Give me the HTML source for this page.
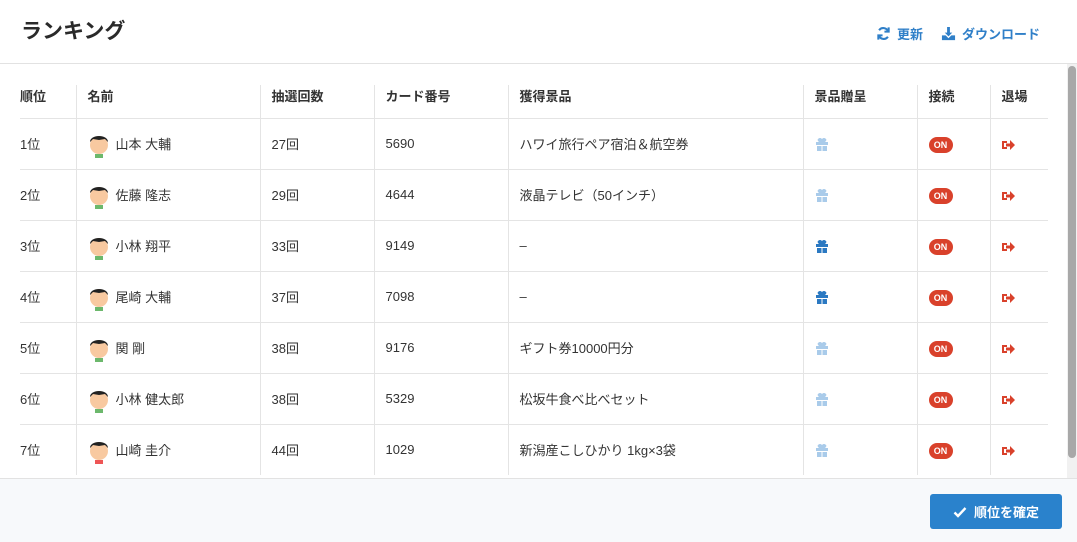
<!DOCTYPE html>
<html><head><meta charset="utf-8"><style>
*{margin:0;padding:0;box-sizing:border-box}
body{width:1077px;height:542px;overflow:hidden;background:#fff;font-family:"Liberation Sans","Noto Sans CJK JP",sans-serif;color:#333;position:relative}
.hd{position:absolute;left:0;top:0;width:1077px;height:64px;border-bottom:1px solid #e2e2e2}
.hd h1{position:absolute;left:21px;top:15px;font-size:21px;font-weight:bold;color:#2a2a2a}
.act{position:absolute;top:24px;font-size:13px;font-weight:bold;color:#2f7fc8;display:flex;align-items:center;gap:6px}
.sb{position:absolute;left:1067px;top:64px;width:10px;height:414px;background:#f1f1f1}
.sb div{position:absolute;left:1px;top:2px;width:8px;height:392px;background:#a8a8a8;border-radius:4px}
table{position:absolute;left:20px;top:85px;border-collapse:collapse;font-size:13px}
td,th{height:51px;border-bottom:1px solid #e4e4e4;border-left:1px solid #e4e4e4;text-align:left;padding-left:11px;vertical-align:middle;font-weight:normal;color:#333}
th{height:33px;font-weight:bold;vertical-align:top;padding-top:1px}
td:first-child,th:first-child{border-left:none;padding-left:0}
tr:last-child td{border-bottom:none}
td svg{vertical-align:middle}
.nm{display:flex;align-items:center;gap:6px}
.av{width:22px;height:28px;position:relative;display:inline-block}
.on{display:inline-block;background:#d9412b;color:#fff;font-size:9px;font-weight:bold;border-radius:8px;width:24px;height:16px;line-height:16px;text-align:center;vertical-align:middle;margin-top:2px}
.ft{position:absolute;left:0;top:478px;width:1077px;height:64px;background:#f7f9fb;border-top:1px solid #e2e2e2}
.btn{position:absolute;left:930px;top:15px;width:132px;height:35px;background:#2a82cc;border-radius:3px;color:#fff;font-size:13px;font-weight:bold;display:flex;align-items:center;justify-content:center;gap:7px}
</style></head><body>
<div class="hd"><h1>ランキング</h1>
<div class="act" style="left:876px"><svg width="15" height="15" viewBox="0 0 16 16" fill="none" stroke="#2f7fc8" stroke-width="2.2"><path d="M13 6A5.5 5.5 0 0 0 3.3 4.5M3 10a5.5 5.5 0 0 0 9.7 1.5"/><path d="M13.5 1.5v4.5H9M2.5 14.5V10H7" fill="none"/></svg>更新</div>
<div class="act" style="left:941px"><svg width="15" height="15" viewBox="0 0 16 16" fill="#2f7fc8"><path d="M6.5 1h3v6h2.5L8 11 4 7h2.5z"/><path d="M1 10h4l3 3 3-3h4v5H1z"/></svg>ダウンロード</div>
</div>
<div class="sb"><div></div></div>
<table>
<tr><th style="width:56px">順位</th><th style="width:184px">名前</th><th style="width:114px">抽選回数</th><th style="width:134px">カード番号</th><th style="width:295px">獲得景品</th><th style="width:114px">景品贈呈</th><th style="width:73px">接続</th><th style="width:58px">退場</th></tr>
<tr><td>1位</td><td><div class="nm"><svg class="av" viewBox="0 0 22 28"><circle cx="11" cy="15" r="9" fill="#f8c9a0"/><path d="M2 12c0-8 18-8 18 0l-3-3-6 1-6-1z" fill="#222"/><rect x="7" y="24" width="8" height="4" fill="#6cb86c"/></svg>山本 大輔</div></td><td>27回</td><td>5690</td><td>ハワイ旅行ペア宿泊＆航空券</td><td><svg width="14" height="13" viewBox="0 0 14 13" fill="#a9cbea"><path d="M3 1a2 2 0 0 1 4 3 2 2 0 0 1 4-3c1 1 0 2-1 3h3v3H1V4h3C3 3 2 2 3 1z"/><rect x="2" y="8" width="4.5" height="5"/><rect x="7.5" y="8" width="4.5" height="5"/></svg></td><td><span class="on">ON</span></td><td><svg width="13" height="12" viewBox="0 0 13 12" fill="#d9412b"><path d="M0 2h5v2H2v4h3v2H0z"/><path d="M4 4.5h4V1l5 5-5 5V7.5H4z"/></svg></td></tr>
<tr><td>2位</td><td><div class="nm"><svg class="av" viewBox="0 0 22 28"><circle cx="11" cy="15" r="9" fill="#f8c9a0"/><path d="M2 12c0-8 18-8 18 0l-3-3-6 1-6-1z" fill="#222"/><rect x="7" y="24" width="8" height="4" fill="#6cb86c"/></svg>佐藤 隆志</div></td><td>29回</td><td>4644</td><td>液晶テレビ（50インチ）</td><td><svg width="14" height="13" viewBox="0 0 14 13" fill="#a9cbea"><path d="M3 1a2 2 0 0 1 4 3 2 2 0 0 1 4-3c1 1 0 2-1 3h3v3H1V4h3C3 3 2 2 3 1z"/><rect x="2" y="8" width="4.5" height="5"/><rect x="7.5" y="8" width="4.5" height="5"/></svg></td><td><span class="on">ON</span></td><td><svg width="13" height="12" viewBox="0 0 13 12" fill="#d9412b"><path d="M0 2h5v2H2v4h3v2H0z"/><path d="M4 4.5h4V1l5 5-5 5V7.5H4z"/></svg></td></tr>
<tr><td>3位</td><td><div class="nm"><svg class="av" viewBox="0 0 22 28"><circle cx="11" cy="15" r="9" fill="#f8c9a0"/><path d="M2 12c0-8 18-8 18 0l-3-3-6 1-6-1z" fill="#222"/><rect x="7" y="24" width="8" height="4" fill="#6cb86c"/></svg>小林 翔平</div></td><td>33回</td><td>9149</td><td>–</td><td><svg width="14" height="13" viewBox="0 0 14 13" fill="#2b79c2"><path d="M3 1a2 2 0 0 1 4 3 2 2 0 0 1 4-3c1 1 0 2-1 3h3v3H1V4h3C3 3 2 2 3 1z"/><rect x="2" y="8" width="4.5" height="5"/><rect x="7.5" y="8" width="4.5" height="5"/></svg></td><td><span class="on">ON</span></td><td><svg width="13" height="12" viewBox="0 0 13 12" fill="#d9412b"><path d="M0 2h5v2H2v4h3v2H0z"/><path d="M4 4.5h4V1l5 5-5 5V7.5H4z"/></svg></td></tr>
<tr><td>4位</td><td><div class="nm"><svg class="av" viewBox="0 0 22 28"><circle cx="11" cy="15" r="9" fill="#f8c9a0"/><path d="M2 12c0-8 18-8 18 0l-3-3-6 1-6-1z" fill="#222"/><rect x="7" y="24" width="8" height="4" fill="#6cb86c"/></svg>尾崎 大輔</div></td><td>37回</td><td>7098</td><td>–</td><td><svg width="14" height="13" viewBox="0 0 14 13" fill="#2b79c2"><path d="M3 1a2 2 0 0 1 4 3 2 2 0 0 1 4-3c1 1 0 2-1 3h3v3H1V4h3C3 3 2 2 3 1z"/><rect x="2" y="8" width="4.5" height="5"/><rect x="7.5" y="8" width="4.5" height="5"/></svg></td><td><span class="on">ON</span></td><td><svg width="13" height="12" viewBox="0 0 13 12" fill="#d9412b"><path d="M0 2h5v2H2v4h3v2H0z"/><path d="M4 4.5h4V1l5 5-5 5V7.5H4z"/></svg></td></tr>
<tr><td>5位</td><td><div class="nm"><svg class="av" viewBox="0 0 22 28"><circle cx="11" cy="15" r="9" fill="#f8c9a0"/><path d="M2 12c0-8 18-8 18 0l-3-3-6 1-6-1z" fill="#222"/><rect x="7" y="24" width="8" height="4" fill="#6cb86c"/></svg>関 剛</div></td><td>38回</td><td>9176</td><td>ギフト券10000円分</td><td><svg width="14" height="13" viewBox="0 0 14 13" fill="#a9cbea"><path d="M3 1a2 2 0 0 1 4 3 2 2 0 0 1 4-3c1 1 0 2-1 3h3v3H1V4h3C3 3 2 2 3 1z"/><rect x="2" y="8" width="4.5" height="5"/><rect x="7.5" y="8" width="4.5" height="5"/></svg></td><td><span class="on">ON</span></td><td><svg width="13" height="12" viewBox="0 0 13 12" fill="#d9412b"><path d="M0 2h5v2H2v4h3v2H0z"/><path d="M4 4.5h4V1l5 5-5 5V7.5H4z"/></svg></td></tr>
<tr><td>6位</td><td><div class="nm"><svg class="av" viewBox="0 0 22 28"><circle cx="11" cy="15" r="9" fill="#f8c9a0"/><path d="M2 12c0-8 18-8 18 0l-3-3-6 1-6-1z" fill="#222"/><rect x="7" y="24" width="8" height="4" fill="#6cb86c"/></svg>小林 健太郎</div></td><td>38回</td><td>5329</td><td>松坂牛食べ比べセット</td><td><svg width="14" height="13" viewBox="0 0 14 13" fill="#a9cbea"><path d="M3 1a2 2 0 0 1 4 3 2 2 0 0 1 4-3c1 1 0 2-1 3h3v3H1V4h3C3 3 2 2 3 1z"/><rect x="2" y="8" width="4.5" height="5"/><rect x="7.5" y="8" width="4.5" height="5"/></svg></td><td><span class="on">ON</span></td><td><svg width="13" height="12" viewBox="0 0 13 12" fill="#d9412b"><path d="M0 2h5v2H2v4h3v2H0z"/><path d="M4 4.5h4V1l5 5-5 5V7.5H4z"/></svg></td></tr>
<tr><td>7位</td><td><div class="nm"><svg class="av" viewBox="0 0 22 28"><circle cx="11" cy="15" r="9" fill="#f8c9a0"/><path d="M2 12c0-8 18-8 18 0l-3-3-6 1-6-1z" fill="#222"/><rect x="7" y="24" width="8" height="4" fill="#e55"/></svg>山崎 圭介</div></td><td>44回</td><td>1029</td><td>新潟産こしひかり 1kg×3袋</td><td><svg width="14" height="13" viewBox="0 0 14 13" fill="#a9cbea"><path d="M3 1a2 2 0 0 1 4 3 2 2 0 0 1 4-3c1 1 0 2-1 3h3v3H1V4h3C3 3 2 2 3 1z"/><rect x="2" y="8" width="4.5" height="5"/><rect x="7.5" y="8" width="4.5" height="5"/></svg></td><td><span class="on">ON</span></td><td><svg width="13" height="12" viewBox="0 0 13 12" fill="#d9412b"><path d="M0 2h5v2H2v4h3v2H0z"/><path d="M4 4.5h4V1l5 5-5 5V7.5H4z"/></svg></td></tr>
</table>
<div class="ft"><div class="btn"><svg width="14" height="12" viewBox="0 0 14 12" fill="none" stroke="#fff" stroke-width="2.4"><path d="M1.5 6.5l3.5 3.5 7.5-8"/></svg>順位を確定</div></div>
</body></html>
